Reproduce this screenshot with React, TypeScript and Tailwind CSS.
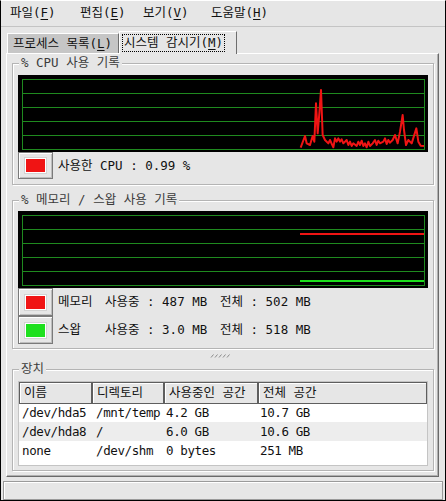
import React from 'react';

const cpuPoints: [number, number][] = [
  [902, 263], [915, 228], [920, 250], [930, 255], [938, 228], [943, 245], [948, 130], [953, 220],
  [958, 160], [963, 90], [968, 225], [975, 240], [985, 250], [990, 240], [1000, 262], [1005, 235],
  [1010, 245], [1015, 235], [1020, 245], [1025, 238], [1030, 250], [1040, 240], [1045, 255], [1050, 245],
  [1055, 258], [1060, 250], [1070, 258], [1075, 245], [1080, 255], [1085, 242], [1090, 258], [1095, 250],
  [1100, 262], [1105, 245], [1110, 258], [1118, 250], [1125, 240], [1130, 255], [1135, 242], [1140, 250],
  [1150, 245], [1155, 235], [1160, 252], [1165, 240], [1170, 248], [1178, 240], [1185, 225], [1193, 250],
  [1200, 215], [1208, 165], [1212, 210], [1218, 255], [1225, 240], [1235, 250], [1249, 205], [1255, 245],
  [1262, 257], [1272, 258],
];

function Grid() {
  return (
    <g stroke="#1f8a1f" strokeWidth="1" fill="none" shapeRendering="crispEdges">
      <rect x="4.5" y="4.5" width="402" height="70" />
      {[18.5, 32.5, 46.5, 60.5].map(y => (
        <line key={y} x1="4" x2="407" y1={y} y2={y} />
      ))}
    </g>
  );
}

function Mn({ k }: { k: string }) {
  return <span className="underline underline-offset-2">{k}</span>;
}

function ColorButton({ color, h = 'h-[27px]' }: { color: string; h?: string }) {
  return (
    <div className={`w-[35px] ${h} shrink-0 border border-[#7a7a7a] shadow-[inset_1px_1px_0_#fff,inset_-1px_-1px_0_#bdbdbd] flex items-center justify-center`}>
      <div className="w-[23px] h-[17px] border border-[#d2d2d2] bg-white p-px">
        <div className="w-full h-full" style={{ background: color }} />
      </div>
    </div>
  );
}

function Frame({ label, className, children }: { label: string; className: string; children: React.ReactNode }) {
  return (
    <fieldset className={`border border-[#b4b4b4] shadow-[inset_1px_1px_0_#fff,1px_1px_0_#fff] px-[5px] ${className}`}>
      <legend className="ml-[1px] px-[2px] leading-[16px] text-[#3c3c3c] bg-[#e6e6e6]">{label}</legend>
      {children}
    </fieldset>
  );
}

export default function App() {
  const cpu = cpuPoints.map(([x, y]) => `${x / 3 - 18},${y / 3 - 15}`).join(' ');
  return (
    <div className="w-[446px] h-[501px] bg-[#e6e6e6] border-t border-l border-t-white border-l-black border-r border-b border-r-black border-b-black flex flex-col text-[12.5px] leading-[16px] text-[#111] font-['DejaVu_Sans_Mono','Noto_Sans_CJK_KR',monospace] overflow-hidden">
      {/* menu bar */}
      <div className="h-[26px] shrink-0 border-b border-[#c4c4c4] flex items-center pl-[9px] pb-[2px]">
        <span className="w-[70px]">파일(<Mn k="F" />)</span>
        <span className="w-[63px]">편집(<Mn k="E" />)</span>
        <span className="w-[68px]">보기(<Mn k="V" />)</span>
        <span>도움말(<Mn k="H" />)</span>
      </div>

      {/* tabs */}
      <div className="mt-[4px] h-[22px] shrink-0 flex items-end pl-[6px]">
        <div className="w-[112px] h-[20px] bg-[#c6c6c6] border-t border-l border-white border-r border-r-[#6e6e6e] flex items-center pl-[5px] whitespace-nowrap">
          프로세스 목록(<Mn k="L" />)
        </div>
        <div className="relative z-10 -mb-[1px] w-[118px] h-[23px] bg-[#e6e6e6] border-t border-l border-white border-r border-r-[#6e6e6e] flex items-center pl-[2px] whitespace-nowrap">
          <span className="border border-dotted border-black px-[1px] leading-[16px]">시스템 감시기(<Mn k="M" />)</span>
        </div>
      </div>

      {/* notebook page */}
      <div className="ml-[5px] w-[433px] h-[424px] shrink-0 border-t border-l border-white border-r border-b border-r-[#6a6a6a] border-b-[#6a6a6a] shadow-[inset_-1px_-1px_0_#b0b0b0] pl-[5px] pt-[1px] flex flex-col">
        <Frame label="% CPU 사용 기록" className="w-[422px] h-[130px] pt-[4px]">
          <svg width="410" height="77" className="block bg-black">
            <Grid />
            <polyline points={cpu} fill="none" stroke="#f01414" strokeWidth="2" strokeLinejoin="round" />
          </svg>
          <div className="flex items-center gap-[5px]">
            <ColorButton color="#f01414" />
            <span>사용한 CPU : 0.99 %</span>
          </div>
        </Frame>

        <Frame label="% 메모리 / 스왑 사용 기록" className="mt-[7px] w-[422px] h-[157px] pt-[3px]">
          <svg width="410" height="77" className="block bg-black">
            <Grid />
            <line x1="282" x2="406" y1="23" y2="23" stroke="#f01414" strokeWidth="2" />
            <line x1="282" x2="406" y1="70" y2="70" stroke="#1ee01e" strokeWidth="2" />
          </svg>
          <div className="flex items-center gap-[5px]">
            <ColorButton color="#f01414" h="h-[28px]" />
            <div className="grid grid-cols-[47px_115px_auto] whitespace-nowrap">
              <span>메모리</span>
              <span>사용중 : 487 MB</span>
              <span>전체 : 502 MB</span>
            </div>
          </div>
          <div className="flex items-center gap-[5px]">
            <ColorButton color="#1ee01e" h="h-[28px]" />
            <div className="grid grid-cols-[47px_115px_auto] whitespace-nowrap">
              <span>스왑</span>
              <span>사용중 : 3.0 MB</span>
              <span>전체 : 518 MB</span>
            </div>
          </div>
        </Frame>

        {/* paned handle */}
        <div className="h-[12px] shrink-0 flex items-center justify-center pr-[8px]">
          <svg width="22" height="4" className="block mt-[1px]">
            {[0, 4, 8, 12, 16].map(x => (
              <line key={x} x1={x + 1} y1="3.5" x2={x + 3.5} y2="0.5" stroke="#8a8a8a" strokeWidth="1" />
            ))}
          </svg>
        </div>

        <Frame label="장치" className="w-[422px] h-[110px] pt-[4px]">
          <div className="w-[410px] h-[85px] bg-white border border-[#c4c4c4]">
            <div className="flex h-[22px]">
              {[
                { t: '이름', w: 'w-[73px]' },
                { t: '디렉토리', w: 'w-[72px]' },
                { t: '사용중인 공간', w: 'w-[94px]' },
                { t: '전체 공간', w: 'flex-1' },
              ].map(c => (
                <div key={c.t} className={`${c.w} h-full bg-[#e6e6e6] border border-[#5e5e5e] shadow-[inset_1px_1px_0_#fff] flex items-center pl-[4px] whitespace-nowrap`}>
                  {c.t}
                </div>
              ))}
            </div>
            {[
              { cells: ['/dev/hda5', '/mnt/temp', '4.2 GB', '10.7 GB'], bg: 'bg-white', h: 'h-[18px]' },
              { cells: ['/dev/hda8', '/', '6.0 GB', '10.6 GB'], bg: 'bg-[#ededed]', h: 'h-[19px]' },
              { cells: ['none', '/dev/shm', '0 bytes', '251 MB'], bg: 'bg-white', h: 'h-[19px]' },
            ].map(r => (
              <div key={r.cells[0]} className={`flex items-center tracking-[-0.4px] ${r.bg} ${r.h}`}>
                <span className="w-[73px] pl-[3px] whitespace-nowrap">{r.cells[0]}</span>
                <span className="w-[72px] pl-[4px] whitespace-nowrap">{r.cells[1]}</span>
                <span className="w-[94px] pl-[2px] whitespace-nowrap">{r.cells[2]}</span>
                <span className="flex-1 pl-[2px] whitespace-nowrap">{r.cells[3]}</span>
              </div>
            ))}
          </div>
        </Frame>
      </div>

      {/* status bar */}
      <div className="mt-[4px] ml-[2px] w-[440px] h-[19px] shrink-0 border border-[#9a9a9a] shadow-[inset_1px_1px_0_#fff]" />
    </div>
  );
}
